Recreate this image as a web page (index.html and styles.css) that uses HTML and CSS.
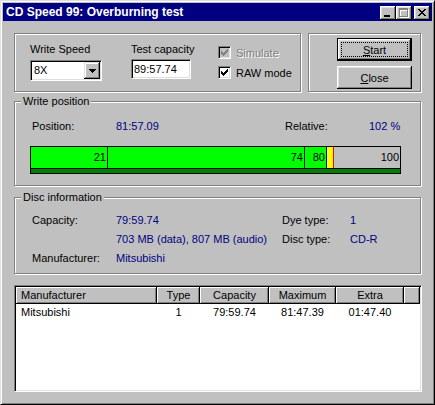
FILE: index.html
```html
<!DOCTYPE html>
<html lang="en">
<head>
    <meta charset="UTF-8">
    <title>CD Speed 99: Overburning test</title>
    <link rel="stylesheet" href="styles.css">
</head>
<body>
    <div class="window">
        <div class="titlebar">
            <span class="title">CD Speed 99: Overburning test</span>
            <div class="caption-buttons">
                <span class="cap-btn">
                    <svg class="glyph-min" width="6" height="2" shape-rendering="crispEdges"><path d="M0 0h6v2h-6z" fill="#000"/></svg>
                </span>
                <span class="cap-btn">
                    <svg class="glyph-max" width="10" height="10" shape-rendering="crispEdges">
                        <path d="M1 1h9v9h-9z M2 3v6h7v-6z" fill="#fff" fill-rule="evenodd"/>
                        <path d="M0 0h9v9h-9z M1 2v6h7v-6z" fill="#808080" fill-rule="evenodd"/>
                    </svg>
                </span>
                <span class="cap-btn close-btn">
                    <svg class="glyph-close" width="8" height="7" shape-rendering="crispEdges"><path d="M0 0h2v1h-2z M6 0h2v1h-2z M1 1h2v1h-2z M5 1h2v1h-2z M2 2h4v1h-4z M3 3h2v1h-2z M2 4h4v1h-4z M1 5h2v1h-2z M5 5h2v1h-2z M0 6h2v1h-2z M6 6h2v1h-2z" fill="#000"/></svg>
                </span>
            </div>
        </div>

        <div class="content">
            <div class="top-row">
                <div class="group settings">
                    <div class="field speed">
                        <div class="label">Write Speed</div>
                        <div class="combo">
                            <span class="combo-value">8X</span>
                            <span class="combo-btn">
                                <svg width="7" height="4" shape-rendering="crispEdges"><path d="M0 0h7v1h-7z M1 1h5v1h-5z M2 2h3v1h-3z M3 3h1v1h-1z" fill="#000"/></svg>
                            </span>
                        </div>
                    </div>
                    <div class="field capacity">
                        <div class="label">Test capacity</div>
                        <div class="textbox">89:57.74</div>
                    </div>
                    <div class="checks">
                        <div class="check disabled">
                            <span class="box">
                                <svg width="7" height="7" shape-rendering="crispEdges"><path d="M6 0h1v1h-1z M5 1h2v1h-2z M0 2h1v1h-1z M4 2h3v1h-3z M0 3h2v1h-2z M3 3h3v1h-3z M0 4h5v1h-5z M1 5h3v1h-3z M2 6h1v1h-1z" fill="#808080"/></svg>
                            </span>
                            <span class="check-label">Simulate</span>
                        </div>
                        <div class="check">
                            <span class="box">
                                <svg width="7" height="7" shape-rendering="crispEdges"><path d="M6 0h1v1h-1z M5 1h2v1h-2z M0 2h1v1h-1z M4 2h3v1h-3z M0 3h2v1h-2z M3 3h3v1h-3z M0 4h5v1h-5z M1 5h3v1h-3z M2 6h1v1h-1z" fill="#000"/></svg>
                            </span>
                            <span class="check-label">RAW mode</span>
                        </div>
                    </div>
                </div>
                <div class="group actions">
                    <button class="btn default"><u>S</u>tart</button>
                    <button class="btn"><u>C</u>lose</button>
                </div>
            </div>

            <div class="group write-pos">
                <span class="caption">Write position</span>
                <div class="pos-row">
                    <span class="pos-label">Position:</span>
                    <span class="pos-value value">81:57.09</span>
                    <span class="pos-label">Relative:</span>
                    <span class="value">102 %</span>
                </div>
                <div class="bar">
                    <div class="bar-track">
                        <span class="seg green" style="width: 76px">21</span>
                        <span class="tick black"></span>
                        <span class="seg green" style="width: 196px">74</span>
                        <span class="tick black"></span>
                        <span class="seg green" style="width: 21px">80</span>
                        <span class="tick blue"></span>
                        <span class="seg yellow" style="width: 6px"></span>
                        <span class="tick red"></span>
                        <span class="seg grey" style="width: 66px">100</span>
                    </div>
                    <div class="bar-foot"></div>
                </div>
            </div>

            <div class="group disc-info">
                <span class="caption">Disc information</span>
                <div class="info-grid">
                    <span>Capacity:</span>
                    <span class="value">79:59.74</span>
                    <span>Dye type:</span>
                    <span class="value">1</span>

                    <span></span>
                    <span class="value">703 MB (data), 807 MB (audio)</span>
                    <span>Disc type:</span>
                    <span class="value">CD-R</span>

                    <span>Manufacturer:</span>
                    <span class="value">Mitsubishi</span>
                </div>
            </div>

            <div class="listview">
                <div class="list-header">
                    <span class="col col-name">Manufacturer</span>
                    <span class="col col-type">Type</span>
                    <span class="col col-cap">Capacity</span>
                    <span class="col col-max">Maximum</span>
                    <span class="col col-extra">Extra</span>
                    <span class="col col-fill"></span>
                </div>
                <div class="list-row">
                    <span class="col col-name">Mitsubishi</span>
                    <span class="col col-type">1</span>
                    <span class="col col-cap">79:59.74</span>
                    <span class="col col-max">81:47.39</span>
                    <span class="col col-extra">01:47.40</span>
                </div>
            </div>
        </div>
    </div>
</body>
</html>
```

FILE: styles.css
```css
body {
    margin: 0;
    font-family: "Liberation Sans", Arial, sans-serif;
    font-size: 11px;
    color: #000;
    background: #c0c0c0;
}

.window {
    width: 435px;
    height: 405px;
    box-sizing: border-box;
    display: flex;
    flex-direction: column;
    padding: 2px;
    background: #c0c0c0;
    border: 1px solid;
    border-color: #dfdfdf #000 #000 #dfdfdf;
    box-shadow: inset 1px 1px #fff, inset -1px -1px #808080;
}

/* title bar */
.titlebar {
    height: 18px;
    display: flex;
    align-items: center;
    background: #000080;
    padding: 0 2px 0 3px;
}

.title {
    color: #fff;
    font-size: 12px;
    font-weight: bold;
    line-height: 18px;
    white-space: nowrap;
}

.caption-buttons {
    margin-left: auto;
    margin-top: 2px;
    display: flex;
}

.cap-btn {
    width: 16px;
    height: 14px;
    box-sizing: border-box;
    position: relative;
    background: #c0c0c0;
    box-shadow: inset -1px -1px #000, inset 1px 1px #fff, inset -2px -2px #808080, inset 2px 2px #dfdfdf;
}

.cap-btn svg {
    position: absolute;
    display: block;
}

.glyph-min { left: 4px; top: 9px; }
.glyph-max { left: 3px; top: 2px; }
.glyph-close { left: 4px; top: 3px; }

.close-btn {
    margin-left: 2px;
}

/* body */
.content {
    flex: 1;
    padding: 12px 11px 0 11px;
}

.top-row {
    display: flex;
    gap: 7px;
}

.group {
    position: relative;
    box-sizing: border-box;
    border: 1px solid #808080;
    box-shadow: inset 1px 1px #fff, 1px 1px #fff;
}

.caption {
    position: absolute;
    top: -7px;
    left: 6px;
    padding: 0 2px;
    line-height: 13px;
    background: #c0c0c0;
}

.value {
    color: #000080;
}

/* write settings */
.settings {
    width: 287px;
    height: 59px;
    display: flex;
    padding: 9px 0 0 15px;
}

.label {
    line-height: 13px;
}

.speed {
    width: 101px;
}

.speed .label {
    margin-bottom: 4px;
}

.capacity {
    width: 87px;
}

.capacity .label {
    margin-bottom: 3px;
}

.combo {
    width: 72px;
    height: 21px;
    box-sizing: border-box;
    display: flex;
    padding: 1px;
    background: #fff;
    border: 1px solid;
    border-color: #808080 #fff #fff #808080;
    box-shadow: inset 1px 1px #000, inset -1px -1px #dfdfdf;
}

.combo-value {
    flex: 1;
    padding-left: 2px;
    line-height: 17px;
}

.combo-btn {
    width: 16px;
    height: 17px;
    display: flex;
    align-items: center;
    justify-content: center;
    background: #c0c0c0;
    box-shadow: inset -1px -1px #000, inset 1px 1px #dfdfdf, inset -2px -2px #808080, inset 2px 2px #fff;
}

.combo-btn svg {
    display: block;
    margin-top: 1px;
}

.textbox {
    width: 60px;
    height: 20px;
    box-sizing: border-box;
    padding-left: 2px;
    line-height: 18px;
    background: #fff;
    border: 1px solid;
    border-color: #808080 #fff #fff #808080;
    box-shadow: inset 1px 1px #000, inset -1px -1px #dfdfdf;
}

.checks {
    display: flex;
    flex-direction: column;
    gap: 7px;
    padding-top: 3px;
}

.check {
    display: flex;
    gap: 5px;
    height: 13px;
}

.box {
    width: 13px;
    height: 13px;
    box-sizing: border-box;
    padding: 2px 0 0 2px;
    background: #fff;
    border: 1px solid;
    border-color: #808080 #fff #fff #808080;
    box-shadow: inset 1px 1px #000, inset -1px -1px #dfdfdf;
}

.box svg {
    display: block;
}

.check-label {
    line-height: 13px;
    padding-top: 1px;
}

.check.disabled .box {
    background: #c0c0c0;
}

.check.disabled .check-label {
    color: #808080;
    text-shadow: 1px 1px #fff;
}

/* buttons */
.actions {
    width: 113px;
    height: 59px;
    display: flex;
    flex-direction: column;
    align-items: flex-end;
    gap: 5px;
    padding: 4px 8px 0 0;
}

.btn {
    width: 75px;
    height: 23px;
    box-sizing: border-box;
    margin: 0;
    padding: 0;
    border: none;
    position: relative;
    font-family: inherit;
    font-size: 11px;
    color: #000;
    background: #c0c0c0;
    box-shadow: inset -1px -1px #000, inset 1px 1px #fff, inset -2px -2px #808080, inset 2px 2px #dfdfdf;
}

.btn.default {
    border: 1px solid #000;
    box-shadow: inset -1px -1px #000, inset 1px 1px #fff, inset -2px -2px #808080, inset 2px 2px #dfdfdf;
}

.btn.default::after {
    content: "";
    position: absolute;
    inset: 3px;
    border: 1px dotted #000;
}

/* write position */
.write-pos {
    height: 85px;
    margin-top: 9px;
    padding: 18px 0 0 15px;
}

.pos-row {
    display: flex;
    line-height: 13px;
    padding-left: 2px;
}

.pos-label {
    width: 84px;
}

.pos-value {
    width: 169px;
}

.bar {
    width: 371px;
    height: 28px;
    box-sizing: border-box;
    margin-top: 13px;
    border: 1px solid #000;
}

.bar-track {
    display: flex;
    height: 21px;
}

.seg {
    box-sizing: border-box;
    padding-right: 1px;
    text-align: right;
    line-height: 21px;
}

.green { background: #00ff00; }
.yellow { background: #ffff00; }
.grey { background: #c0c0c0; }

.tick {
    width: 1px;
}

.tick.black { background: #000; }
.tick.blue { background: #0000ff; }
.tick.red { background: #ff0000; }

.bar-foot {
    height: 4px;
    border-top: 1px solid #000;
    background: #008000;
}

/* disc information */
.disc-info {
    height: 77px;
    margin-top: 11px;
    padding: 13px 0 0 17px;
}

.info-grid {
    display: grid;
    grid-template-columns: 84px 166px 68px auto;
    grid-auto-rows: 19px;
    line-height: 19px;
}

/* list */
.listview {
    width: 408px;
    height: 107px;
    box-sizing: border-box;
    margin-top: 11px;
    padding: 1px;
    background: #fff;
    border: 1px solid;
    border-color: #808080 #fff #fff #808080;
    box-shadow: inset 1px 1px #000, inset -1px -1px #dfdfdf;
}

.list-header,
.list-row {
    display: flex;
}

.list-header .col {
    height: 17px;
    box-sizing: border-box;
    line-height: 17px;
    background: #c0c0c0;
    box-shadow: inset -1px -1px #000, inset 1px 1px #fff, inset -2px -2px #808080;
}

.list-row .col {
    line-height: 16px;
}

.col {
    text-align: center;
    white-space: nowrap;
}

.col-name { width: 141px; padding-left: 5px; box-sizing: border-box; text-align: left; }
.col-type { width: 43px; }
.col-cap { width: 69px; }
.col-max { width: 67px; }
.col-extra { width: 68px; }
.col-fill { flex: 1; }
```
